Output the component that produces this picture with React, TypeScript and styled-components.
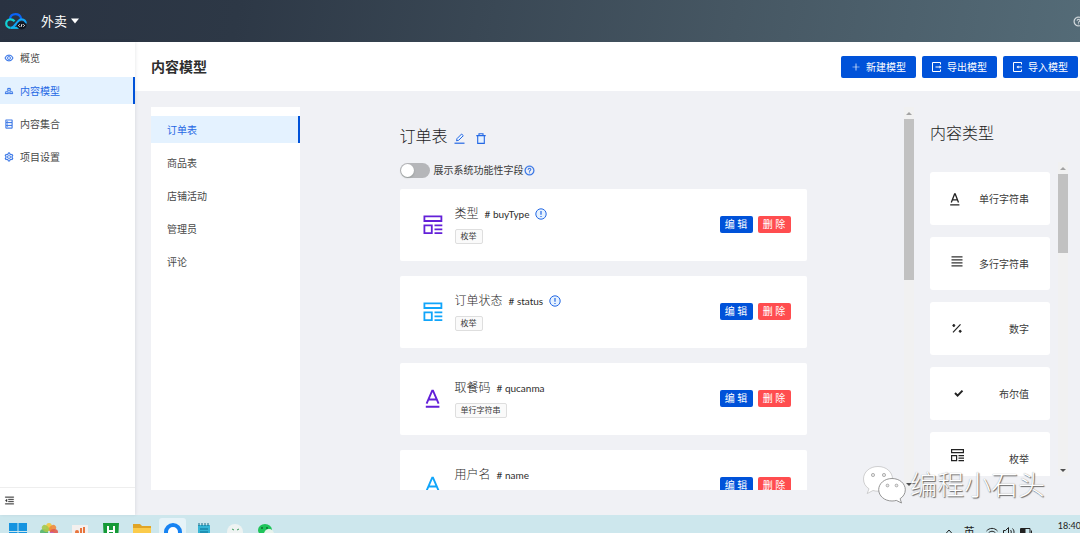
import React from "react";
import styled, { createGlobalStyle } from "styled-components";
import {
  AiOutlineEye,
  AiOutlineGold,
  AiOutlineDatabase,
  AiOutlineSetting,
  AiOutlinePlus,
  AiOutlineMenuFold,
  AiOutlineQuestionCircle,
} from "react-icons/ai";

const blue = "#0052d9";
const linkBlue = "#2468e4";

const GlobalStyle = createGlobalStyle`
  * { box-sizing: border-box; }
  body {
    margin: 0;
    color: #3a3a3a;
    font-family: Lato, "Noto Sans CJK SC", sans-serif;
    font-size: 10px;
    line-height: 16px;
  }
  ul { list-style: none; margin: 0; padding: 0; }
  h1, h2 { margin: 0; }
  a { color: inherit; text-decoration: none; }
  button { font: inherit; cursor: pointer; }
  svg { display: block; flex: none; }
`;

const Page = styled.div`
  position: relative;
  display: flex;
  flex-direction: column;
  height: 100vh;
  overflow: hidden;
  background: #f0f1f5;
`;

const TopBar = styled.header`
  display: flex;
  align-items: center;
  flex: none;
  height: 42px;
  padding-left: 5px;
  overflow: hidden;
  color: #fff;
  background: linear-gradient(100deg, #293241 0%, #2d3846 22%, #465763 68%, #546b77 100%);
`;

const ProjectButton = styled.button`
  display: flex;
  align-items: center;
  gap: 4px;
  margin-left: 14px;
  padding: 0;
  border: 0;
  background: none;
  color: #fff;
  font-size: 13px;
`;

const HelpButton = styled.button`
  margin: 0 -4px 0 auto;
  padding: 0;
  border: 0;
  background: none;
  color: #e4e8ea;

  svg { stroke-width: 24; }
`;

const Body = styled.div`
  display: flex;
  flex: 1;
  min-height: 0;
`;

const Sidebar = styled.nav`
  position: relative;
  display: flex;
  flex-direction: column;
  flex: none;
  width: 135px;
  background: #fff;
  box-shadow: 1px 0 3px rgba(0, 21, 41, 0.08);
`;

const NavList = styled.ul`
  display: flex;
  flex: 1;
  flex-direction: column;
  gap: 6px;
  padding-top: 2px;
`;

const NavLink = styled.a<{ $active?: boolean; $inset: number }>`
  display: flex;
  align-items: center;
  gap: 6px;
  height: 27px;
  padding-left: ${(p) => p.$inset}px;
  border-right: 2px solid ${(p) => (p.$active ? blue : "transparent")};
  background: ${(p) => (p.$active ? "#e4f2ff" : "transparent")};
  color: ${(p) => (p.$active ? linkBlue : "#484848")};

  svg {
    color: ${linkBlue};
    stroke-width: 24;
  }
`;

const CollapseButton = styled.button`
  display: flex;
  align-items: center;
  height: 28px;
  padding: 0 0 2px 4px;
  border: 0;
  border-top: 1px solid #eee;
  background: none;
  color: #333;

  svg { stroke-width: 24; }
`;

const Main = styled.main`
  display: flex;
  flex: 1;
  flex-direction: column;
  min-width: 0;
`;

const PageHeader = styled.div`
  display: flex;
  align-items: center;
  justify-content: space-between;
  flex: none;
  height: 49px;
  padding: 0 2px 0 16px;
  background: #fff;
`;

const PageTitle = styled.h1`
  font-size: 14px;
  line-height: 20px;
  color: #2e2e2e;
`;

const Toolbar = styled.div`
  display: flex;
  gap: 6px;
`;

const PrimaryButton = styled.button`
  display: flex;
  align-items: center;
  gap: 5px;
  height: 22px;
  padding: 0 10px;
  border: 0;
  border-radius: 2px;
  background: ${blue};
  color: #fff;
  white-space: nowrap;
`;

const Workspace = styled.div`
  display: flex;
  flex: 1;
  min-height: 0;
  padding: 16px 0 25px 16px;
`;

const ModelPanel = styled.nav`
  flex: none;
  width: 149px;
  padding-top: 9px;
  background: #fff;
`;

const ModelList = styled.ul`
  display: flex;
  flex-direction: column;
  gap: 6px;
`;

const FieldArea = styled.section`
  display: flex;
  flex: 1;
  justify-content: center;
  min-width: 0;
  padding: 18px 0 0 2px;
  overflow: hidden;
`;

const FieldColumn = styled.div`
  flex: 0 1 407px;
`;

const TitleRow = styled.div`
  display: flex;
  align-items: center;
  gap: 6px;
  height: 22px;
`;

const SectionTitle = styled.h2`
  font-size: 16px;
  font-weight: 300;
  line-height: 22px;
  color: #1c1c1c;
`;

const IconButton = styled.button`
  display: flex;
  margin-top: 5px;
  padding: 0 5px 0 0;
  border: 0;
  background: none;
  color: ${linkBlue};
`;

const SwitchRow = styled.div`
  display: flex;
  align-items: center;
  height: 16px;
  margin: 15px 0 11px;

  label { padding-left: 4px; }
  svg { color: ${linkBlue}; stroke-width: 24; }
`;

const Switch = styled.input`
  appearance: none;
  width: 30px;
  height: 15px;
  margin: 0;
  padding: 1px;
  border-radius: 8px;
  background: #b5b6b9;

  &::before {
    content: "";
    display: block;
    width: 13px;
    height: 13px;
    border-radius: 50%;
    background: #fff;
    box-shadow: 0 1px 2px rgba(0, 35, 11, 0.2);
  }
  &:checked { background: ${blue}; }
  &:checked::before { margin-left: 15px; }
`;

const FieldList = styled.ul`
  display: flex;
  flex-direction: column;
  gap: 15px;
`;

const FieldCard = styled.li`
  display: flex;
  align-items: center;
  height: 72px;
  padding: 0 16px 0 23px;
  border-radius: 2px;
  background: #fff;
`;

const FieldInfo = styled.div`
  flex: 1;
  padding: 0 0 2px 12px;
`;

const FieldHeading = styled.div`
  display: flex;
  align-items: center;
  gap: 6px;
  height: 18px;
  margin-bottom: 6px;
  color: #2c2c2c;
`;

const FieldName = styled.span`
  font-size: 12px;
  font-weight: 300;
`;

const Tag = styled.span`
  display: block;
  width: max-content;
  height: 15px;
  padding: 0 5px;
  border: 1px solid #dedede;
  border-radius: 2px;
  background: #fafafa;
  font-size: 8px;
  line-height: 13px;
`;

const Actions = styled.div`
  display: flex;
  gap: 5px;
  padding-bottom: 2px;
`;

const SmallButton = styled.button<{ $danger?: boolean }>`
  width: 33px;
  height: 17px;
  padding: 0;
  border: 0;
  border-radius: 2px;
  background: ${(p) => (p.$danger ? "#ff4d4f" : blue)};
  color: #fff;
  line-height: 17px;
`;

const Track = styled.div`
  display: flex;
  flex: none;
  flex-direction: column;
  align-items: center;
  width: 10px;
  background: #f1f1f1;
`;

const Thumb = styled.div<{ $length: number }>`
  width: 10px;
  height: ${(p) => p.$length}%;
  background: #c1c1c1;
`;

const ArrowCell = styled.div<{ $last?: boolean }>`
  display: grid;
  place-items: center;
  height: 12px;
  margin-top: ${(p) => (p.$last ? "auto" : "0")};
`;

const TypePanel = styled.aside`
  display: flex;
  flex: none;
  flex-direction: column;
  width: 166px;
  padding: 15px 12px 14px 16px;
`;

const TypeScroller = styled.div`
  display: flex;
  flex: 1;
  gap: 8px;
  min-height: 0;
  margin-top: 18px;
`;

const TypeList = styled.ul`
  display: flex;
  flex: 1;
  flex-direction: column;
  gap: 12px;
  padding-top: 10px;
  overflow: hidden;
`;

const TypeCard = styled.li`
  display: flex;
  align-items: center;
  justify-content: space-between;
  flex: none;
  height: 53px;
  padding: 0 21px 0 20px;
  border-radius: 3px;
  background: #fff;
`;

const Taskbar = styled.footer`
  display: flex;
  align-items: flex-start;
  flex: none;
  height: 18px;
  padding: 3px 0 0 4px;
  overflow: hidden;
  background: #cde7ed;
  color: #222;
`;

const TaskTile = styled.button<{ $active?: boolean }>`
  display: flex;
  justify-content: center;
  width: 27px;
  height: 28px;
  margin-right: 4px;
  padding: 5px 0 0;
  border: 0;
  border-radius: 3px;
  background: ${(p) => (p.$active ? "#e6f3f8" : "transparent")};
`;

const Tray = styled.div`
  display: flex;
  align-items: flex-start;
  gap: 11px;
  margin-left: auto;
  padding-top: 8px;
`;

const TrayGroup = styled.div`
  display: flex;
  gap: 5px;
`;

const Ime = styled.span`
  font-size: 11px;
  line-height: 12px;
`;

const Clock = styled.time`
  margin: -7px -1px 0 15px;
  font-size: 9px;
  line-height: 14px;
`;

const Watermark = styled.div`
  position: absolute;
  right: 35px;
  bottom: 28px;
  display: flex;
  align-items: center;
  gap: 3px;
  color: #fff;
  font-size: 27px;
  font-weight: 300;
  line-height: 40px;
  text-shadow: 1px 1px 1px #666, 0 0 1px #999;
`;

const CloudLogo = () => (
  <svg width="22" height="17" viewBox="0 0 22 17" fill="none">
    <path d="M4.800 6.400C5.200 3.200 7.600 1.200 10.500 1.200c2.800 0 5 1.700 5.700 4.500" stroke="#0a63f5" strokeWidth="2.200" />
    <path d="M9.600 8.300C8.400 6.900 7.200 6.300 5.600 6.300c-2.500 0-4.400 1.800-4.400 4.200s1.900 4.400 4.400 4.400" stroke="#12d0d4" strokeWidth="2.200" />
    <path d="M5.600 14.900c1.300 0 2.300-.5 3.300-1.600l4.600-5.400c.9-1.100 1.900-1.600 3.100-1.600 2.500 0 4.200 1.800 4.200 4.200" stroke="#12a4f6" strokeWidth="2.200" />
    <path d="M6 14.900h8" stroke="#12b5ea" strokeWidth="2" />
    <ellipse cx="16.600" cy="12.500" rx="4.800" ry="3.900" fill="#101722" />
    <path d="m14.700 11.300-1.300 1.200 1.300 1.200M18.300 11.300l1.300 1.200-1.300 1.200M17 11l-1 3" stroke="#fff" strokeWidth=".9" />
  </svg>
);

const ExportIcon = () => (
  <svg width="10" height="10" viewBox="0 0 10 10" fill="none" stroke="#fff">
    <path d="M8.500 2.500v-2h-8v9h8v-2M3.500 5h5" />
    <path d="M7.500 3.500 9.500 5 7.500 6.500z" fill="#fff" stroke="none" />
  </svg>
);

const ImportIcon = () => (
  <svg width="10" height="10" viewBox="0 0 10 10" fill="none" stroke="#fff">
    <path d="M8.500 2.500v-2h-8v9h8v-2M4.500 5h4.500" />
    <path d="M5.500 3.500 3.500 5l2 1.500z" fill="#fff" stroke="none" />
  </svg>
);

const EnumIcon = ({ color }: { color: string }) => (
  <svg width="20" height="20" viewBox="0 0 20 20" fill="none" stroke={color} strokeWidth="1.800">
    <path d="M1.400 1.400h17v4.600h-17zM1.400 10.400h7.400v7.800h-7.400zM11.500 10.300h7.800M11.500 14.300h7.800M11.500 18.200h7.800" />
  </svg>
);

const LetterIcon = ({ color }: { color: string }) => (
  <svg width="20" height="20" viewBox="0 0 20 20" fill="none" stroke={color} strokeWidth="1.900">
    <path d="M3.600 14.700 9.200 1.700h.8L15.600 14.700M5.600 10.500h8M2.800 17.800h13.600" />
  </svg>
);

const NoticeIcon = () => (
  <svg width="12" height="12" viewBox="0 0 12 12" fill="none" stroke={linkBlue}>
    <circle cx="6" cy="6" r="5.200" fill="#e6f2ff" />
    <path d="M6 3v3.800M6 7.900v1.200" strokeWidth="1.200" />
  </svg>
);

const EditIcon = () => (
  <svg width="11" height="11" viewBox="0 0 11 11" fill="none" stroke={linkBlue}>
    <path d="M2.500 7.800 3 5.600 7.600 1l1.700 1.700-4.600 4.600z" fill="#e6f2ff" />
    <path d="M.5 10.200h10" strokeWidth="1.200" />
  </svg>
);

const TrashIcon = () => (
  <svg width="10" height="11" viewBox="0 0 10 11" fill="none" stroke={linkBlue} strokeWidth="1.100">
    <path d="M1.700 3v7.400h6.600V3" fill="#e6f2ff" />
    <path d="M.3 2.600h9.400M3 2.400V.7h4v1.700" />
  </svg>
);

const Arrow = ({ down, color }: { down?: boolean; color: string }) => (
  <svg width="6" height="3" viewBox="0 0 6 3" fill={color}>
    <path d={down ? "M0 0h6L3 3z" : "M0 3h6L3 0z"} />
  </svg>
);

const Scrollbar = ({ length }: { length: number }) => (
  <Track aria-hidden="true">
    <ArrowCell><Arrow color="#a3a3a3" /></ArrowCell>
    <Thumb $length={length} />
    <ArrowCell $last><Arrow down color="#505050" /></ArrowCell>
  </Track>
);

const LinesIcon = () => (
  <svg width="14" height="16" viewBox="0 0 14 16" stroke="#333" strokeWidth="1.200">
    <path d="M1.500 .8h11M1.500 3.800h11M1.500 6.800h11M1.500 9.800h11" />
  </svg>
);

const PercentIcon = () => (
  <svg width="14" height="16" viewBox="0 0 14 16" fill="#222" stroke="#222">
    <path d="M3 11.300 10.500 3.300" strokeWidth="1.200" />
    <circle cx="3.800" cy="4.500" r="1" />
    <circle cx="10.200" cy="10.300" r="1" />
  </svg>
);

const CheckIcon = () => (
  <svg width="16" height="16" viewBox="0 0 16 16" fill="none" stroke="#222" strokeWidth="2">
    <path d="m5 7 2.600 2.600L12.500 4.600" />
  </svg>
);

const SmallEnumIcon = () => (
  <svg width="15" height="22" viewBox="0 0 15 22" fill="none" stroke="#222" strokeWidth="1.200">
    <path d="M1.600 1.600h11.800v3H1.600zM1.600 7.600h5v5h-5zM8.500 7.600H14M8.500 10.100H14M8.500 12.600H14" />
  </svg>
);

const SmallLetterIcon = () => (
  <svg width="10" height="14" viewBox="0 0 10 14" fill="none" stroke="#222" strokeWidth="1.300">
    <path d="M1.300 10.500 4.600 2h.6L8.500 10.500M2.500 7.800h5M.2 12.800h9.200" />
  </svg>
);

const ChatBubbles = () => (
  <svg width="46" height="40" viewBox="0 0 46 40" fill="#fff" stroke="#b4b4b4" strokeWidth=".6">
    <path d="M17 1.500C8.700 1.500 2.500 7 2.500 14c0 4.200 2 7.500 5.500 9.800L6.200 28.500l5.800-3c1.600.4 3.300.7 5 .7 8.300 0 14.500-5.200 14.500-12.200S25.300 1.500 17 1.500z" />
    <path d="M31 13.500c-7.500 0-13.300 5-13.300 11.200S23.500 36 31 36c1.500 0 3-.2 4.300-.6L40.500 38l-1.400-4.300c3.200-2 5.200-5.200 5.200-8.900C44.300 18.500 38.500 13.500 31 13.500z" stroke="#8a8a8a" strokeWidth=".9" />
    <g fill="#e8e8e8" stroke="#888">
      <circle cx="12" cy="10" r="1.600" /><circle cx="23" cy="10" r="1.600" />
      <circle cx="26.500" cy="20.500" r="1.400" /><circle cx="35.500" cy="20.500" r="1.400" />
    </g>
  </svg>
);

const navItems = [
  { label: "概览", icon: <AiOutlineEye size={10} /> },
  { label: "内容模型", icon: <AiOutlineGold size={10} />, active: true },
  { label: "内容集合", icon: <AiOutlineDatabase size={10} /> },
  { label: "项目设置", icon: <AiOutlineSetting size={10} /> },
];

const models = ["订单表", "商品表", "店铺活动", "管理员", "评论"];

const purple = "#6320d8";
const sky = "#11a5fa";

const fields = [
  { name: "类型", key: "buyType", type: "枚举", notice: true, icon: <EnumIcon color={purple} /> },
  { name: "订单状态", key: "status", type: "枚举", notice: true, icon: <EnumIcon color={sky} /> },
  { name: "取餐码", key: "qucanma", type: "单行字符串", icon: <LetterIcon color={purple} /> },
  { name: "用户名", key: "name", type: "单行字符串", icon: <LetterIcon color={sky} /> },
];

const types = [
  { label: "单行字符串", icon: <SmallLetterIcon /> },
  { label: "多行字符串", icon: <LinesIcon /> },
  { label: "数字", icon: <PercentIcon /> },
  { label: "布尔值", icon: <CheckIcon /> },
  { label: "枚举", icon: <SmallEnumIcon /> },
];

const petals = ["#f3c63a", "#f08b3c", "#e25a4e", "#c765b8", "#5a7fd6", "#48a7c8", "#55b56a", "#a6c94b"];

const tasks = [
  {
    label: "开始",
    icon: <svg width="18" height="18"><path d="M0 0h8.500v8H0zM9.500 0h8.500v8H9.500zM0 9h8.500v8H0zM9.500 9h8.500v8H9.500z" fill="#1694e0" /></svg>,
  },
  {
    label: "照片",
    icon: (
      <svg width="18" height="18" viewBox="0 0 18 18">
        {petals.map((color, i) => (
          <ellipse key={color} cx="9" cy="4" rx="3" ry="4" fill={color} opacity=".9" transform={`rotate(${i * 45} 9 9)`} />
        ))}
      </svg>
    ),
  },
  {
    label: "图表",
    icon: (
      <svg width="16" height="18">
        <path d="M0 2h16v16H0z" fill="#f4f0ee" />
        <circle cx="5" cy="9" r="2" fill="#e8743c" />
        <path d="M8 5h2v11H8zM11 4h2v12h-2z" fill="#e8743c" />
      </svg>
    ),
  },
  {
    label: "编辑器",
    icon: (
      <svg width="16" height="18">
        <path d="M0 0h16l-1 18H1z" fill="#159a37" />
        <path d="M5 3v12M11 3v12M5 8h6" stroke="#fff" strokeWidth="2" />
      </svg>
    ),
  },
  {
    label: "文件",
    icon: (
      <svg width="18" height="18">
        <path d="M0 1h7l2 2h9v15H0z" fill="#e0a526" />
        <path d="M0 5h18v13H0z" fill="#fbcb4b" />
      </svg>
    ),
  },
  {
    label: "浏览器",
    active: true,
    icon: (
      <svg width="18" height="18">
        <circle cx="9" cy="9" r="7" fill="#fff" stroke="#1683f2" strokeWidth="4" />
      </svg>
    ),
  },
  {
    label: "记事本",
    icon: (
      <svg width="14" height="18">
        <path d="M1 2h12v16H1z" fill="#35b5d6" />
        <path d="M3 6h8M3 9h8" stroke="#0b6f92" />
        <path d="M2 0v3M5 0v3M8 0v3M11 0v3" stroke="#176b86" />
      </svg>
    ),
  },
  {
    label: "助手",
    icon: (
      <svg width="18" height="18">
        <circle cx="9" cy="9" r="8" fill="#eef3f2" />
        <path d="M6 6l2 1M13 6l-2 1" stroke="#3a9a5c" />
      </svg>
    ),
  },
  {
    label: "微信",
    icon: (
      <svg width="18" height="18">
        <ellipse cx="8" cy="7" rx="7" ry="6" fill="#1fc45a" />
        <ellipse cx="12" cy="11" rx="5" ry="5" fill="#e8f3ec" />
        <circle cx="5" cy="5" r="1" fill="#0d6f31" /><circle cx="10" cy="5" r="1" fill="#0d6f31" />
      </svg>
    ),
  },
];

export default function App() {
  return (
    <Page>
      <GlobalStyle />
      <TopBar>
        <CloudLogo />
        <ProjectButton type="button">
          外卖
          <svg width="8" height="6" viewBox="0 0 8 6" fill="#fff"><path d="M0 .5h8L4 5.500z" /></svg>
        </ProjectButton>
        <HelpButton type="button" aria-label="帮助"><AiOutlineQuestionCircle size={11} /></HelpButton>
      </TopBar>

      <Body>
        <Sidebar>
          <NavList>
            {navItems.map((item) => (
              <li key={item.label}>
                <NavLink href="#" $active={item.active} $inset={4}>{item.icon}{item.label}</NavLink>
              </li>
            ))}
          </NavList>
          <CollapseButton type="button" aria-label="收起菜单"><AiOutlineMenuFold size={11} /></CollapseButton>
        </Sidebar>

        <Main>
          <PageHeader>
            <PageTitle>内容模型</PageTitle>
            <Toolbar>
              <PrimaryButton type="button"><AiOutlinePlus size={10} />新建模型</PrimaryButton>
              <PrimaryButton type="button"><ExportIcon />导出模型</PrimaryButton>
              <PrimaryButton type="button"><ImportIcon />导入模型</PrimaryButton>
            </Toolbar>
          </PageHeader>

          <Workspace>
            <ModelPanel>
              <ModelList>
                {models.map((model, i) => (
                  <li key={model}><NavLink href="#" $active={i === 0} $inset={16}>{model}</NavLink></li>
                ))}
              </ModelList>
            </ModelPanel>

            <FieldArea>
              <FieldColumn>
                <TitleRow>
                  <SectionTitle>订单表</SectionTitle>
                  <IconButton type="button" aria-label="编辑模型"><EditIcon /></IconButton>
                  <IconButton type="button" aria-label="删除模型"><TrashIcon /></IconButton>
                </TitleRow>
                <SwitchRow>
                  <Switch type="checkbox" role="switch" id="system-fields" />
                  <label htmlFor="system-fields">展示系统功能性字段</label>
                  <AiOutlineQuestionCircle size={11} />
                </SwitchRow>
                <FieldList>
                  {fields.map((field) => (
                    <FieldCard key={field.key}>
                      {field.icon}
                      <FieldInfo>
                        <FieldHeading>
                          <FieldName>{field.name}</FieldName>
                          <span># {field.key}</span>
                          {field.notice && <NoticeIcon />}
                        </FieldHeading>
                        <Tag>{field.type}</Tag>
                      </FieldInfo>
                      <Actions>
                        <SmallButton type="button">编 辑</SmallButton>
                        <SmallButton type="button" $danger>删 除</SmallButton>
                      </Actions>
                    </FieldCard>
                  ))}
                </FieldList>
              </FieldColumn>
            </FieldArea>
            <Scrollbar length={42} />

            <TypePanel>
              <SectionTitle>内容类型</SectionTitle>
              <TypeScroller>
                <TypeList>
                  {types.map((type) => (
                    <TypeCard key={type.label}>{type.icon}{type.label}</TypeCard>
                  ))}
                </TypeList>
                <Scrollbar length={25} />
              </TypeScroller>
            </TypePanel>
          </Workspace>
        </Main>
      </Body>

      <Taskbar>
        {tasks.map((task) => (
          <TaskTile key={task.label} type="button" aria-label={task.label} $active={task.active}>{task.icon}</TaskTile>
        ))}
        <Tray>
          <svg width="8" height="10" fill="none" stroke="#222"><path d="m.5 8 3.500-4 3.500 4" /></svg>
          <Ime>英</Ime>
          <TrayGroup>
            <svg width="12" height="12" fill="none" stroke="#222">
              <path d="M.5 5c3-3.500 8-3.500 11 0M2.500 7c2-2.300 5-2.300 7 0M4.500 9c1-1 2-1 3 0" />
            </svg>
            <svg width="12" height="12" fill="none" stroke="#222">
              <path d="M.5 4.500h2l3-3v9l-3-2h-2zM7.500 4c1 1 1 3 0 4M9.500 2.500c2 2 2 5 0 7" />
            </svg>
            <svg width="12" height="12" fill="none" stroke="#222">
              <path d="M.5 2.500h9.500v7H.5zM11.500 4.500v3" /><path d="M1 3h4v6H1z" fill="#222" />
            </svg>
          </TrayGroup>
          <Clock>18:40</Clock>
        </Tray>
      </Taskbar>

      <Watermark><ChatBubbles />编程小石头</Watermark>
    </Page>
  );
}
